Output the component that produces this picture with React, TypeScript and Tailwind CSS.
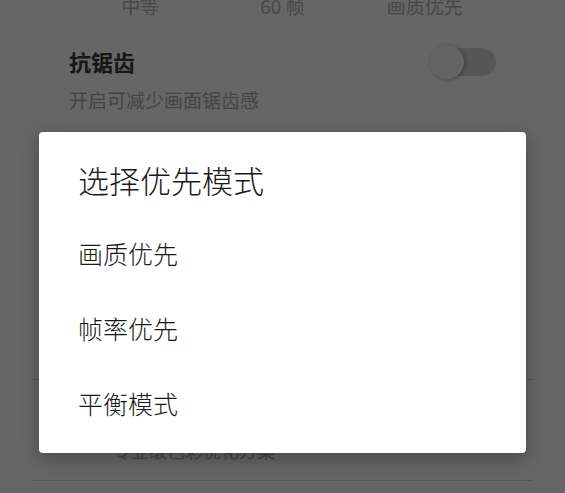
import React from "react";

const modes = ["画质优先", "帧率优先", "平衡模式"];

function Toggle() {
  return (
    <div className="relative h-[34px] w-[66px] shrink-0">
      <div className="absolute right-0 top-[3px] h-[28px] w-[56px] rounded-full bg-[#d6d6d6]" />
      <div className="absolute left-0 top-0 h-[34px] w-[34px] rounded-full bg-[#fafafa] shadow-[1px_1px_4px_rgba(0,0,0,0.3)]" />
    </div>
  );
}

function SettingsPage() {
  return (
    <div className="-mt-[6px] flex flex-col">
      {/* quality / fps / priority summary */}
      <div className="grid grid-cols-3 px-[69px] text-center text-[19px] leading-[24px] text-[#b2b2b2]">
        <span>中等</span>
        <span>60 帧</span>
        <span>画质优先</span>
      </div>

      {/* anti-aliasing switch */}
      <div className="mt-[29px] px-[69px]">
        <div className="flex h-[28px] items-center justify-between">
          <span className="text-[22px] font-bold leading-[28px] text-[#3a3a3a]">抗锯齿</span>
          <div className="mt-[2px]">
            <Toggle />
          </div>
        </div>
        <p className="mt-[13px] text-[19px] leading-[24px] text-[#aaaaaa]">开启可减少画面锯齿感</p>
      </div>

      {/* shadow quality */}
      <div className="mt-[40px] flex h-[200px] flex-col gap-[10px] px-[69px]">
        <div className="flex items-center justify-between">
          <span className="text-[22px] font-bold leading-[28px] text-[#3a3a3a]">阴影质量</span>
          <span className="text-[19px] leading-[24px] text-[#aaaaaa]">高</span>
        </div>
        <p className="text-[19px] leading-[24px] text-[#aaaaaa]">提升光影细节表现</p>
      </div>

      <div className="mx-[32px] mt-[27px] h-px bg-[#d8d8d8]" />

      {/* color enhancement */}
      <div className="flex gap-[16px] px-[69px] pb-[18px] pt-[21px]">
        <div className="mt-[4px] h-[28px] w-[28px] rounded-full bg-[#cfd8dc]" />
        <div className="flex flex-col">
          <span className="text-[22px] font-bold leading-[28px] text-[#3a3a3a]">色彩增强</span>
          <span className="mt-[9px] text-[18px] leading-[24px] text-[#aaaaaa]">专业级色彩优化方案</span>
        </div>
      </div>

      <div className="mx-[32px] h-px bg-[#d8d8d8]" />
    </div>
  );
}

export default function App() {
  return (
    <div className="relative h-[493px] w-[565px] overflow-hidden bg-white font-['Noto_Sans_CJK_SC','Noto_Sans',sans-serif]">
      <SettingsPage />

      {/* scrim */}
      <div className="absolute inset-0 bg-black/60" />

      {/* mode picker dialog */}
      <div className="absolute inset-0 flex justify-center pt-[132px]">
        <div className="flex h-fit w-[487px] flex-col rounded-[4px] bg-white px-[39px] pb-[13px] pt-[28px] shadow-[0_6px_18px_rgba(0,0,0,0.3)]">
          <h2 className="text-[31px] font-light leading-[40px] text-[#1a1a1a]">选择优先模式</h2>
          <ul className="mt-[15px] flex flex-col">
            {modes.map((m) => (
              <li key={m} className="flex h-[75px] items-center text-[25px] font-light leading-[32px] text-[#1a1a1a]">
                {m}
              </li>
            ))}
          </ul>
        </div>
      </div>
    </div>
  );
}
